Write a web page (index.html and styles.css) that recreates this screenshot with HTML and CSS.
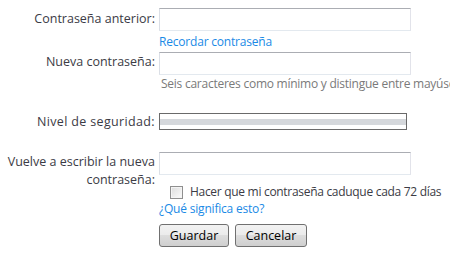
FILE: index.html
```html
<!DOCTYPE html>
<html lang="es">
<head>
<meta charset="utf-8">
<link rel="stylesheet" href="styles.css">
</head>
<body>
<form class="form">
  <div class="label l1">Contraseña anterior:</div>
  <div class="field f1">
    <div class="input"></div>
    <a class="link">Recordar contraseña</a>
  </div>

  <div class="label l2">Nueva contraseña:</div>
  <div class="field f2">
    <div class="input"></div>
    <div class="hint">Seis caracteres como mínimo y distingue entre mayúsculas y minúsculas.</div>
  </div>

  <div class="label l3">Nivel de seguridad:</div>
  <div class="field f3">
    <div class="meter"><div class="meter-bar"></div></div>
  </div>

  <div class="label l4">Vuelve a escribir la nueva contraseña:</div>
  <div class="field f4">
    <div class="input"></div>
    <label class="check"><span class="box"></span><span>Hacer que mi contraseña caduque cada 72 días</span></label>
    <a class="link what">¿Qué significa esto?</a>
    <div class="buttons">
      <button type="button" class="btn save">Guardar</button>
      <button type="button" class="btn cancel">Cancelar</button>
    </div>
  </div>
</form>
</body>
</html>
```
FILE: styles.css
```css
html, body {
  margin: 0;
  padding: 0;
  background: #fff;
  overflow: hidden;
}
body {
  width: 450px;
  height: 257px;
  font-family: "Open Sans", "Noto Sans", sans-serif;
  font-size: 12.5px;
  color: #3b3b45;
}
.form {
  display: grid;
  grid-template-columns: 155px 1fr;
  column-gap: 4px;
  padding-top: 8px;
  align-items: start;
}
.label {
  text-align: right;
  line-height: 18px;
  white-space: nowrap;
}
.l1 { padding-top: 2px; }
.l2 { padding-top: 2px; }
.l3 { padding-top: 20px; letter-spacing: 0.35px; }
.l4 {
  padding-top: 22px;
  white-space: normal;
  padding-left: 4px;
}
.field {
  display: flex;
  flex-direction: column;
  align-items: flex-start;
  min-width: 0;
}
.input {
  box-sizing: border-box;
  width: 252px;
  height: 23px;
  border: 1px solid;
  border-color: #abadb3 #e2e3ea #e3e9ef #dbdfe6;
  background: #fff;
}
.link {
  color: #1a8ae6;
  font-size: 12px;
  letter-spacing: -0.2px;
  line-height: 18px;
  cursor: pointer;
  white-space: nowrap;
}
.f1 .link { margin-top: 2px; }
.f2 { padding-top: 1px; }
.hint {
  color: #7a7a7a;
  font-size: 12px;
  letter-spacing: -0.25px;
  white-space: nowrap;
  line-height: 18px;
  padding-left: 2px;
}
.f3 { padding-top: 20px; }
.meter {
  box-sizing: border-box;
  width: 248px;
  height: 17px;
  border: 1px solid #6a6a6a;
  padding-top: 5px;
}
.meter-bar {
  height: 6px;
  background: #d5d8dc;
}
.f4 { padding-top: 21px; }
.check {
  display: flex;
  align-items: center;
  gap: 7px;
  margin-left: 11px;
  margin-top: 8px;
  font-size: 12px;
  letter-spacing: -0.3px;
  line-height: 18px;
  white-space: nowrap;
}
.box {
  flex: none;
  box-sizing: border-box;
  width: 13px;
  height: 13px;
  border: 1px solid #8f8f8f;
  background: linear-gradient(135deg, #dcdcdc, #fbfbfb);
  box-shadow: inset 0 0 0 1px #f4f4f4;
}
.what { margin-top: -1px; }
.buttons {
  display: flex;
  gap: 6px;
  margin-top: 6px;
}
.btn {
  box-sizing: border-box;
  height: 23px;
  border: 1px solid #707070;
  border-radius: 3px;
  background: linear-gradient(#f2f2f2 0%, #ebebeb 50%, #dddddd 50%, #cfcfcf 100%);
  font-family: "Open Sans", "Noto Sans", sans-serif;
  font-size: 12.5px;
  color: #000;
  padding: 0;
  line-height: 20px;
}
.save { width: 70px; }
.cancel { width: 72px; }
```
